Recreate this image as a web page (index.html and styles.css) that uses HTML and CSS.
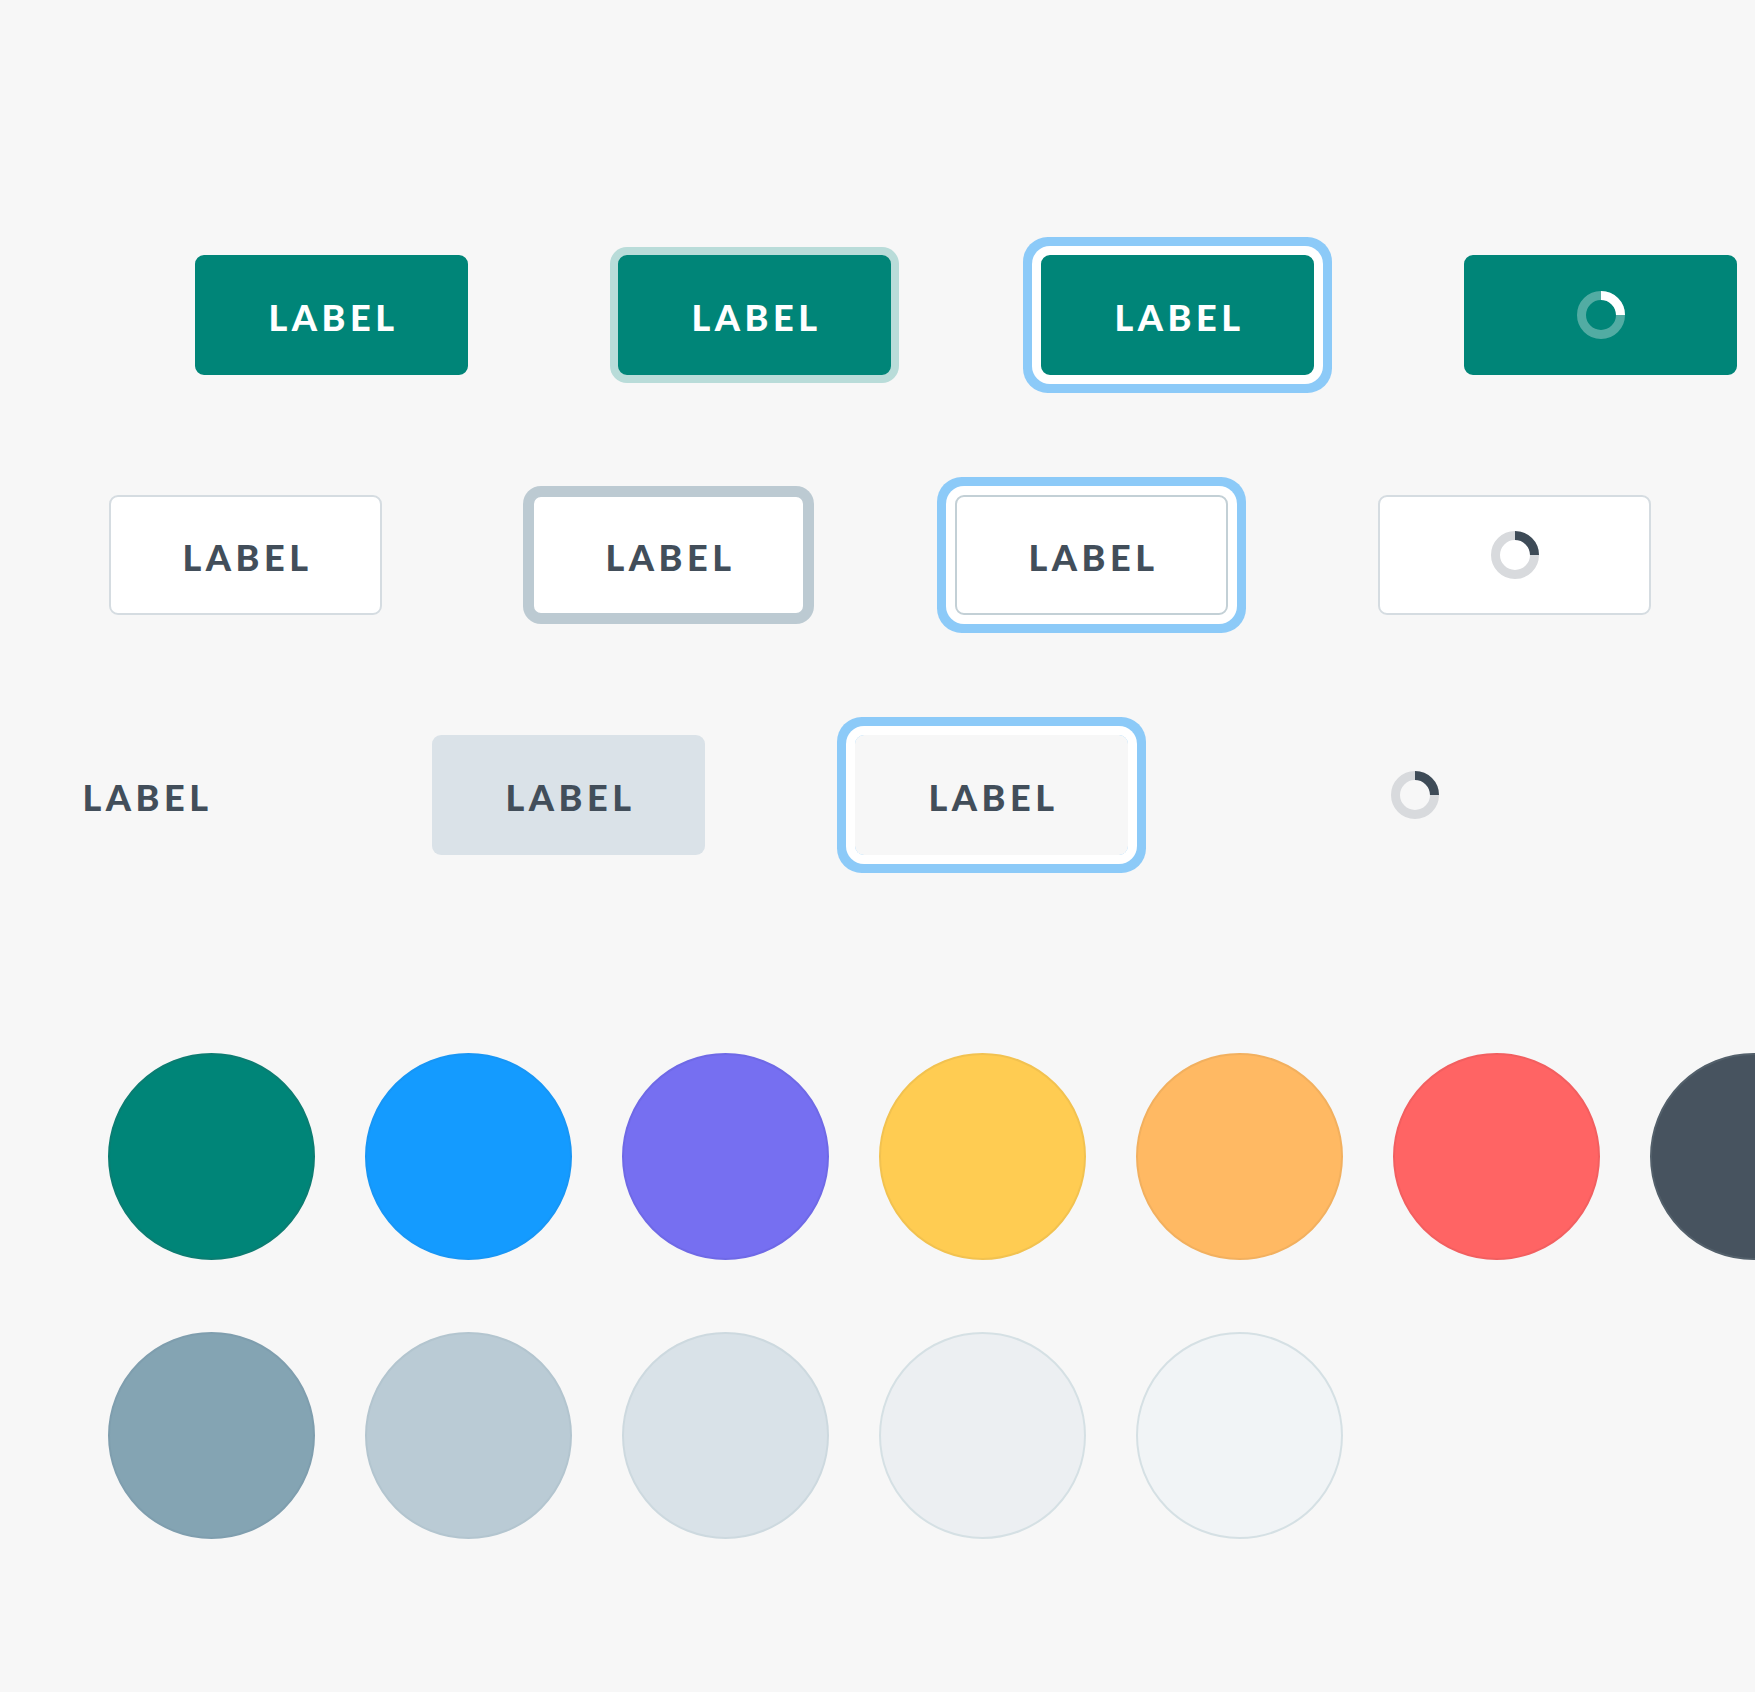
FILE: index.html
```html
<!DOCTYPE html>
<html lang="en">
<head>
<meta charset="utf-8">
<title>Buttons</title>
<link rel="stylesheet" href="styles.css">
</head>
<body>
<main class="page">
  <section class="buttons">
    <div class="row row-1">
      <button class="btn btn-primary">LABEL</button>
      <button class="btn btn-primary is-hover">LABEL</button>
      <button class="btn btn-primary is-focus">LABEL</button>
      <button class="btn btn-primary" aria-label="Loading">
        <svg class="spinner" viewBox="0 0 48 48" width="48" height="48"><circle class="track" cx="24" cy="24" r="19.5"/><path class="arc" d="M24 4.5 A19.5 19.5 0 0 1 43.5 24"/></svg>
      </button>
    </div>
    <div class="row row-2">
      <button class="btn btn-outline">LABEL</button>
      <button class="btn btn-outline is-hover">LABEL</button>
      <button class="btn btn-outline is-focus">LABEL</button>
      <button class="btn btn-outline" aria-label="Loading">
        <svg class="spinner spinner-dark" viewBox="0 0 48 48" width="48" height="48"><circle class="track" cx="24" cy="24" r="19.5"/><path class="arc" d="M24 4.5 A19.5 19.5 0 0 1 43.5 24"/></svg>
      </button>
    </div>
    <div class="row row-3">
      <button class="btn btn-ghost">LABEL</button>
      <button class="btn btn-ghost is-hover">LABEL</button>
      <button class="btn btn-ghost is-focus">LABEL</button>
      <button class="btn btn-ghost" aria-label="Loading">
        <svg class="spinner spinner-dark" viewBox="0 0 48 48" width="48" height="48"><circle class="track" cx="24" cy="24" r="19.5"/><path class="arc" d="M24 4.5 A19.5 19.5 0 0 1 43.5 24"/></svg>
      </button>
    </div>
  </section>
  <section class="swatches">
    <div class="swatch-row">
      <div class="swatch sw-teal"></div>
      <div class="swatch sw-blue"></div>
      <div class="swatch sw-purple"></div>
      <div class="swatch sw-yellow"></div>
      <div class="swatch sw-orange"></div>
      <div class="swatch sw-red"></div>
      <div class="swatch sw-dark"></div>
    </div>
    <div class="swatch-row">
      <div class="swatch sw-g1"></div>
      <div class="swatch sw-g2"></div>
      <div class="swatch sw-g3"></div>
      <div class="swatch sw-g4"></div>
      <div class="swatch sw-g5"></div>
    </div>
  </section>
</main>
</body>
</html>
```
FILE: styles.css
```css
html, body {
  margin: 0;
  padding: 0;
  overflow: hidden;
  background: #f7f7f7;
}

.page {
  padding-top: 255px;
  font-family: Lato, "Open Sans", "Liberation Sans", sans-serif;
}

.buttons {
  display: flex;
  flex-direction: column;
  gap: 120px;
}

.row {
  display: flex;
  gap: 150px;
}

.row-1 { padding-left: 195px; }
.row-2 { padding-left: 109px; }
.row-3 { padding-left: 9px; }

.btn {
  box-sizing: border-box;
  width: 273px;
  height: 120px;
  flex: none;
  display: flex;
  align-items: center;
  justify-content: center;
  border: 2px solid transparent;
  border-radius: 9px;
  padding: 3px 0 0 4px;
  font-family: inherit;
  font-weight: 900;
  font-size: 36px;
  letter-spacing: 4.5px;
  line-height: 1;
  cursor: pointer;
}

.btn[aria-label] {
  padding: 0;
}

.btn-primary {
  background: #008578;
  border-color: #008578;
  color: #ffffff;
}
.btn-primary.is-hover {
  box-shadow: 0 0 0 8px #b9dcd9;
}

.btn-outline {
  background: #ffffff;
  border-color: #d5dce1;
  color: #424e5a;
}
.btn-outline.is-hover {
  border-color: #bccad2;
  box-shadow: 0 0 0 9px #bccad2;
}
.btn-outline.is-focus {
  border-color: #c3d0d6;
}

.btn-ghost {
  background: transparent;
  color: #424e5a;
}
.btn-ghost.is-hover {
  background: #dae2e8;
}

.is-focus {
  box-shadow: 0 0 0 9px #ffffff, 0 0 0 18px #8ccaf8;
}

.spinner .track {
  fill: none;
  stroke: rgba(255, 255, 255, 0.32);
  stroke-width: 9;
}
.spinner .arc {
  fill: none;
  stroke: #ffffff;
  stroke-width: 9;
}
.spinner-dark .track {
  stroke: #d8dadd;
}
.spinner-dark .arc {
  stroke: #3e4b57;
}

.swatches {
  margin-top: 198px;
  display: flex;
  flex-direction: column;
  gap: 72px;
  padding-left: 108px;
}

.swatch-row {
  display: flex;
  gap: 50px;
}

.swatch {
  box-sizing: border-box;
  flex: none;
  width: 207px;
  height: 207px;
  border-radius: 50%;
  border: 2px solid;
}

.sw-teal   { background: #008578; border-color: #0b7d72; }
.sw-blue   { background: #149bff; border-color: #1896f5; }
.sw-purple { background: #766ff1; border-color: #6f69e6; }
.sw-yellow { background: #ffcc52; border-color: #f2c250; }
.sw-orange { background: #ffb963; border-color: #f2b05f; }
.sw-red    { background: #ff6464; border-color: #f25f60; }
.sw-dark   { background: #47535f; border-color: #53606b; }
.sw-g1     { background: #84a4b3; border-color: #7f9eae; }
.sw-g2     { background: #bacbd5; border-color: #b3c5cf; }
.sw-g3     { background: #d9e2e8; border-color: #cdd9df; }
.sw-g4     { background: #eceff2; border-color: #d5e0e4; }
.sw-g5     { background: #f1f4f6; border-color: #d5e0e4; }
```
